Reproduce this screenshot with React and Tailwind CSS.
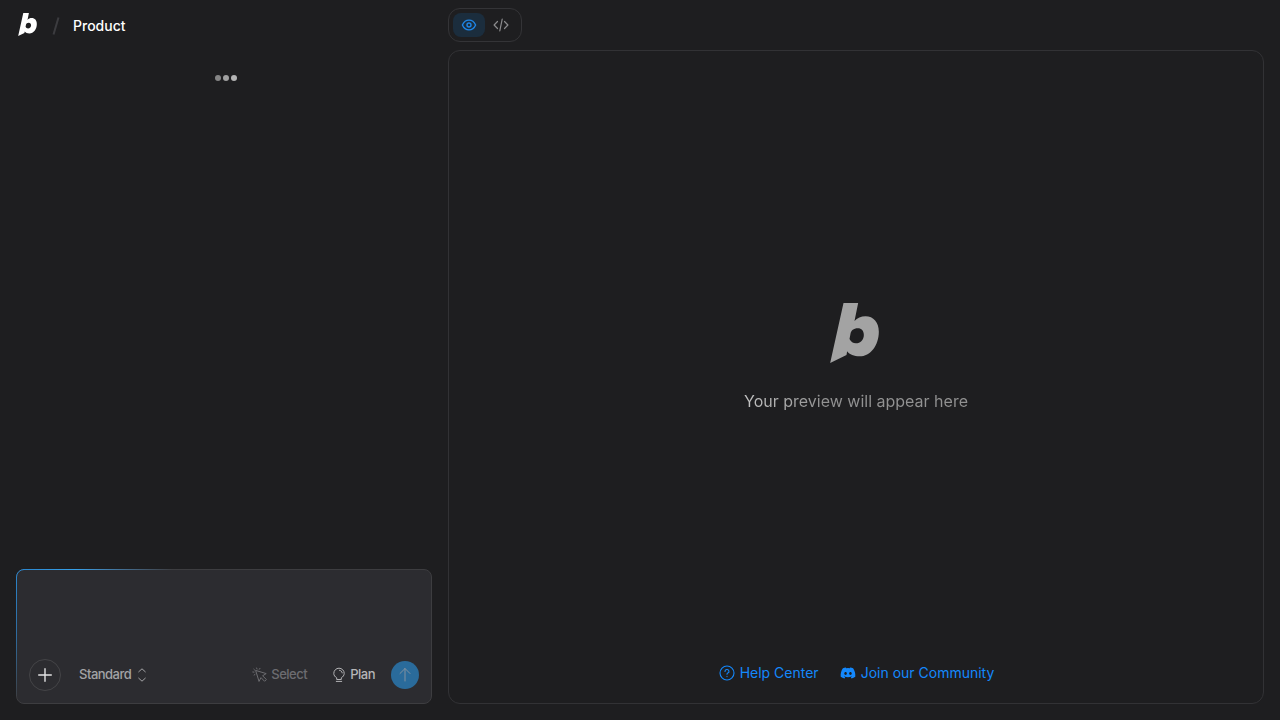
import React from 'react';
import { FaDiscord } from 'react-icons/fa';

function Logo({ className }) {
  return (
    <svg viewBox="46 38 146 180" className={className} fill="currentColor">
      <path
        fillRule="evenodd"
        d="M86 38H130L119 92C127 83 139 78 152 78C176 78 192 96 192 124C192 165 167 198 134 198C118 198 104 193 97 183L95 194L46 218ZM129 114C116 114 109 121 107 130L104 146C108 154 115 159 123 159C137 159 147 148 147 134C147 122 140 114 129 114Z"
      />
    </svg>
  );
}

function Icon({ children, strokeWidth = 1 }) {
  return (
    <svg viewBox="0 0 16 16" className="h-4 w-4 shrink-0" fill="none" stroke="currentColor" strokeWidth={strokeWidth} strokeLinecap="round" strokeLinejoin="round">
      {children}
    </svg>
  );
}

function Header() {
  return (
    <header className="flex h-[50px] items-center pt-px pl-[18px]">
      <Logo className="-mt-[2px] h-[23px] w-[19px] text-white" />
      <svg viewBox="0 0 8 18" className="ml-[15px] h-[18px] w-2 text-[#3c3c3f]">
        <path d="M6.5 0.5L1.5 17.5" stroke="currentColor" strokeWidth="2" />
      </svg>
      <span className="ml-[13px] text-sm font-medium text-white">Product</span>
    </header>
  );
}

function ChatInput() {
  return (
    <div className="relative mx-4 mb-4 flex h-[135px] flex-col justify-end rounded-lg border border-[#3d3d40] bg-[#2c2c30] px-3 pb-3">
      <div className="pointer-events-none absolute -top-px left-1.5 h-px w-[150px] bg-linear-to-r from-[#2b87cf] via-[#36a0e8] via-35% to-[#3d3d40]" />
      <svg className="pointer-events-none absolute -top-px -left-px h-[135px] w-4" fill="none">
        <defs>
          <linearGradient id="side-glow" gradientUnits="userSpaceOnUse" x1="0" y1="0" x2="0" y2="130">
            <stop offset="0" stopColor="#2b87cf" />
            <stop offset="0.5" stopColor="#2b78b8" stopOpacity="0.8" />
            <stop offset="1" stopColor="#2b87cf" stopOpacity="0" />
          </linearGradient>
        </defs>
        <path d="M8 .5A7.5 7.5 0 0 0 .5 8V127" stroke="url(#side-glow)" />
      </svg>
      <div className="flex items-center text-[13px] font-medium tracking-[-0.5px]">
        <button className="flex h-8 w-8 items-center justify-center rounded-full border border-[#444447] text-[#e2e2e3]">
          <Icon strokeWidth={1.4}>
            <path d="M8 1.7V14.3M1.7 8H14.3" />
          </Icon>
        </button>
        <button className="ml-[18px] flex items-center gap-[3px] text-[#a3a3a5]">
          Standard
          <Icon>
            <path d="M4.7 4.8L8 1.8L11.3 4.8M4.7 11.2L8 14.2L11.3 11.2" />
          </Icon>
        </button>
        <button className="ml-auto flex items-center gap-[3px] text-[#6c6c70]">
          <Icon>
            <path d="M4 3.5L14.2 6.6L10.6 8.8L14.4 12.5L12.6 14.3L9 10.6L7.2 14.1Z" />
            <path d="M4.6 1L5 2M1.8 2.2L2.6 3M0.8 5L2 5.1M2.1 8.1L3 7.4M8 1.3L7.3 2.3" />
          </Icon>
          Select
        </button>
        <button className="ml-6 flex items-center gap-[3px] text-[#b5b5b7]">
          <Icon>
            <path d="M5.7 12.1V10.8C4 9.8 2.8 8.3 2.8 6.4A5.2 5.2 0 0 1 13.2 6.4C13.2 8.3 12 9.8 10.3 10.8V12.1ZM5.3 14.4H10.7M8.5 3.3C10 3.5 11 4.5 11.2 5.9" />
          </Icon>
          Plan
        </button>
        <button className="ml-4 flex h-7 w-7 items-center justify-center rounded-full bg-[#2a6b9b] text-[#8292a0]">
          <Icon>
            <path d="M8 14V1.5M3 6.5L8 1.5L13 6.5" />
          </Icon>
        </button>
      </div>
    </div>
  );
}

function ChatPanel() {
  return (
    <aside className="flex w-[448px] shrink-0 flex-col">
      <Header />
      <div className="flex flex-1 justify-center gap-0.5 pt-[25px] pl-1">
        <span className="h-1.5 w-1.5 rounded-full bg-[#858585]" />
        <span className="h-1.5 w-1.5 rounded-full bg-[#a0a0a0]" />
        <span className="h-1.5 w-1.5 rounded-full bg-[#b4b4b4]" />
      </div>
      <ChatInput />
    </aside>
  );
}

function Preview() {
  return (
    <main className="flex flex-1 flex-col pt-2 pr-4 pb-4">
      <div className="flex h-[34px] w-[74px] shrink-0 rounded-xl border border-[#343437] p-1">
        <button className="flex h-6 w-8 items-center justify-center rounded-lg bg-[#1b2d3d] text-[#1f85e5]">
          <Icon strokeWidth={1.4}>
            <path d="M1.4 8C2.7 5 5 3.1 8 3.1S13.3 5 14.6 8C13.3 11 11 12.9 8 12.9S2.7 11 1.4 8Z" />
            <circle cx="8" cy="8" r="2" />
          </Icon>
        </button>
        <button className="flex h-6 w-8 items-center justify-center text-[#8b8b8d]">
          <Icon strokeWidth={1.2}>
            <path d="M4.5 4.5L1.1 8L4.5 11.5M11.5 4.5L14.9 8L11.5 11.5M9.2 2.2L6.8 13.8" />
          </Icon>
        </button>
      </div>
      <section className="mt-2 flex flex-1 flex-col items-center rounded-xl border border-[#323235] text-[#a3a3a3]">
        <Logo className="mt-[252px] mr-[3px] h-[60px] w-[49px]" />
        <p className="mt-[26px] bg-linear-to-r from-[#c4c4c4] via-[#929292] via-35% to-[#929292] bg-clip-text text-base text-transparent">
          Your preview will appear here
        </p>
        <div className="mt-auto mb-5 flex gap-[21px] pl-px text-sm text-[#1488fc]">
          <a className="flex items-center gap-[5px]">
            <Icon strokeWidth={1.1}>
              <circle cx="8" cy="8" r="7" />
              <path d="M6 6.5A2 1.9 0 1 1 8.8 8.1C8.2 8.4 8 8.7 8 9.3M8 11.4V11.6" />
            </Icon>
            Help Center
          </a>
          <a className="flex items-center gap-[5px]">
            <FaDiscord className="h-4 w-4" />
            Join our Community
          </a>
        </div>
      </section>
    </main>
  );
}

export default function App() {
  return (
    <div className="flex h-screen overflow-hidden bg-[#1e1e20] font-['Inter',sans-serif]">
      <ChatPanel />
      <Preview />
    </div>
  );
}
